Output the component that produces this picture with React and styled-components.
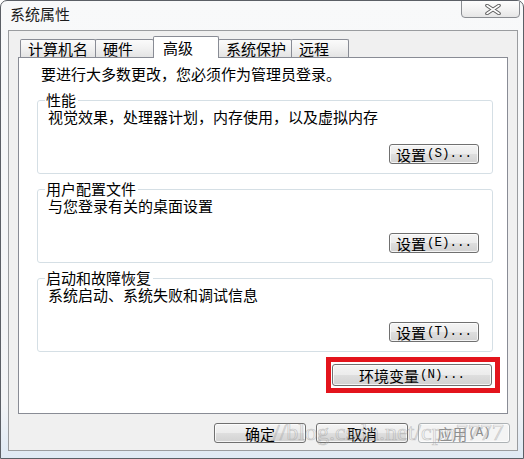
import React from "react";
import styled, { createGlobalStyle } from "styled-components";

const cjk = `"Noto Sans CJK SC", "Noto Sans", sans-serif`;

const GlobalStyle = createGlobalStyle`
  html, body { margin: 0; padding: 0; background: #ffffff; }
  body { font-family: ${cjk}; }
  * { box-sizing: border-box; }
`;

const Window = styled.div`
  position: relative;
  width: 524px;
  height: 459px;
  border: 1px solid #5b5f66;
  border-radius: 7px 7px 0 0;
  background: linear-gradient(180deg, #f8f9fa 0%, #f3f4f6 88%, #dfe9f4 100%);
  display: flex;
  flex-direction: column;
  overflow: hidden;
  font-family: ${cjk};
  color: #000;
`;

const TitleBar = styled.div`
  display: flex;
  justify-content: space-between;
  align-items: flex-start;
  height: 29px;
  padding-left: 9px;
`;

const Title = styled.div`
  margin-top: 4px;
  font-size: 15px;
  line-height: 18px;
  color: #1c1c1c;
`;

const CloseButton = styled.div`
  width: 59px;
  height: 18px;
  margin-top: -1px;
  margin-right: 3px;
  border: 1px solid #8a8d92;
  border-radius: 0 0 4px 4px;
  background: linear-gradient(180deg, #fdfdfd 0%, #f1f1f1 60%, #e6e6e6 100%);
  display: flex;
  align-items: center;
  justify-content: center;
  padding-left: 4px;
`;

const Client = styled.div`
  flex: 1;
  margin: 0 5px 7px 7px;
  border: 1px solid #9a9c9f;
  background: #f0f0f0;
  padding: 5px 9px 0 9px;
  display: flex;
  flex-direction: column;
`;

const TabStrip = styled.div`
  display: flex;
  align-items: flex-end;
  height: 21px;
  padding-left: 2px;
`;

const Tab = styled.div`
  position: relative;
  z-index: ${(p) => (p.$active ? 2 : 1)};
  width: ${(p) => p.$w}px;
  height: ${(p) => (p.$active ? 22 : 18)}px;
  margin-bottom: ${(p) => (p.$active ? -1 : 0)}px;
  margin-right: -1px;
  border: 1px solid #898c95;
  border-bottom: none;
  border-radius: 2px 2px 0 0;
  background: ${(p) =>
    p.$active
      ? "#ffffff"
      : "linear-gradient(180deg, #fbfbfb 0%, #f1f1f1 50%, #e4e4e4 100%)"};
  display: flex;
  align-items: center;
  padding: 1px 0 0 ${(p) => (p.$active ? 9 : 7)}px;
  font-size: 15px;
  line-height: 18px;
  white-space: nowrap;
`;

const Panel = styled.div`
  background: #ffffff;
  border: 1px solid #898c95;
  padding: 7px 14px 20px 18px;
  display: flex;
  flex-direction: column;
`;

const Intro = styled.div`
  margin: 0 0 9px 4px;
  font-size: 15px;
  line-height: 18px;
`;

const Groups = styled.div`
  display: flex;
  flex-direction: column;
  gap: 7px;
`;

const Group = styled.fieldset`
  margin: 0;
  min-width: 0;
  border: 1px solid #d5dfe5;
  border-radius: 3px;
  padding: 0 13px 9px 10px;
`;

const Legend = styled.legend`
  margin-left: -3px;
  padding: 0 2px 0 1px;
  font-size: 15px;
  line-height: 16px;
`;

const Desc = styled.div`
  font-size: 15px;
  line-height: 18px;
`;

const ButtonRow = styled.div`
  display: flex;
  justify-content: flex-end;
  margin-top: 18px;
`;

const Button = styled.div`
  width: ${(p) => p.$w}px;
  height: ${(p) => p.$h || 20}px;
  border: 1px solid ${(p) => (p.$disabled ? "#adb2b5" : "#707070")};
  border-radius: 3px;
  background: ${(p) =>
    p.$disabled
      ? "#f4f4f4"
      : "linear-gradient(180deg, #f4f4f4 0%, #ececec 48%, #dedede 52%, #d2d2d2 100%)"};
  box-shadow: inset 0 0 0 1px rgba(255, 255, 255, 0.75);
  color: ${(p) => (p.$disabled ? "#8d8d8d" : "#000")};
  display: flex;
  align-items: center;
  justify-content: center;
  font-size: 15px;
  line-height: 1;
  white-space: nowrap;
`;

const Hotkey = styled.span`
  font-family: "Liberation Mono", monospace;
  font-size: 12.5px;
  margin-left: 1px;
`;

const EnvRow = styled.div`
  display: flex;
  justify-content: flex-end;
  margin-top: 5px;
  margin-right: -7px;
`;

const Highlight = styled.div`
  border: 5px solid #e3141c;
  padding: 2px 3px 2px 1px;
`;

const Footer = styled.div`
  display: flex;
  justify-content: flex-end;
  gap: 10px;
  margin-top: 9px;
  margin-right: -2px;
`;

const Watermark = styled.div`
  position: absolute;
  left: 272px;
  top: 419px;
  font-family: "Liberation Serif", serif;
  font-size: 24px;
  line-height: 24px;
  color: rgba(255, 255, 255, 0);
  -webkit-text-stroke: 0.7px rgba(160, 160, 160, 0.55);
  pointer-events: none;
  white-space: nowrap;
`;

const CloseIcon = () => (
  <svg width="18" height="11" viewBox="0 0 18 11">
    <path d="M3 1.5 L15 9.5 M15 1.5 L3 9.5" stroke="#5e5e5e" strokeWidth="3.6" strokeLinecap="round" fill="none" />
    <path d="M3 1.5 L15 9.5 M15 1.5 L3 9.5" stroke="#ffffff" strokeWidth="1.6" strokeLinecap="round" fill="none" />
  </svg>
);

const tabs = [
  { label: "计算机名", w: 76 },
  { label: "硬件", w: 59 },
  { label: "高级", w: 66, active: true },
  { label: "系统保护", w: 74 },
  { label: "远程", w: 58 },
];

const groups = [
  { title: "性能", desc: "视觉效果，处理器计划，内存使用，以及虚拟内存", key: "S" },
  { title: "用户配置文件", desc: "与您登录有关的桌面设置", key: "E" },
  { title: "启动和故障恢复", desc: "系统启动、系统失败和调试信息", key: "T" },
];

export default function App() {
  return (
    <>
      <GlobalStyle />
      <Window>
        <TitleBar>
          <Title>系统属性</Title>
          <CloseButton>
            <CloseIcon />
          </CloseButton>
        </TitleBar>
        <Client>
          <TabStrip>
            {tabs.map((t) => (
              <Tab key={t.label} $w={t.w} $active={t.active}>
                {t.label}
              </Tab>
            ))}
          </TabStrip>
          <Panel>
            <Intro>要进行大多数更改，您必须作为管理员登录。</Intro>
            <Groups>
              {groups.map((g) => (
                <Group key={g.title}>
                  <Legend>{g.title}</Legend>
                  <Desc>{g.desc}</Desc>
                  <ButtonRow>
                    <Button $w={90}>
                      设置<Hotkey>({g.key})...</Hotkey>
                    </Button>
                  </ButtonRow>
                </Group>
              ))}
            </Groups>
            <EnvRow>
              <Highlight>
                <Button $w={160} $h={22}>
                  环境变量<Hotkey>(N)...</Hotkey>
                </Button>
              </Highlight>
            </EnvRow>
          </Panel>
          <Footer>
            <Button $w={92}>确定</Button>
            <Button $w={92}>取消</Button>
            <Button $w={92} $disabled>
              应用<Hotkey>(A)</Hotkey>
            </Button>
          </Footer>
        </Client>
        <Watermark>//blog.csdn.net/cpn7777</Watermark>
      </Window>
    </>
  );
}
